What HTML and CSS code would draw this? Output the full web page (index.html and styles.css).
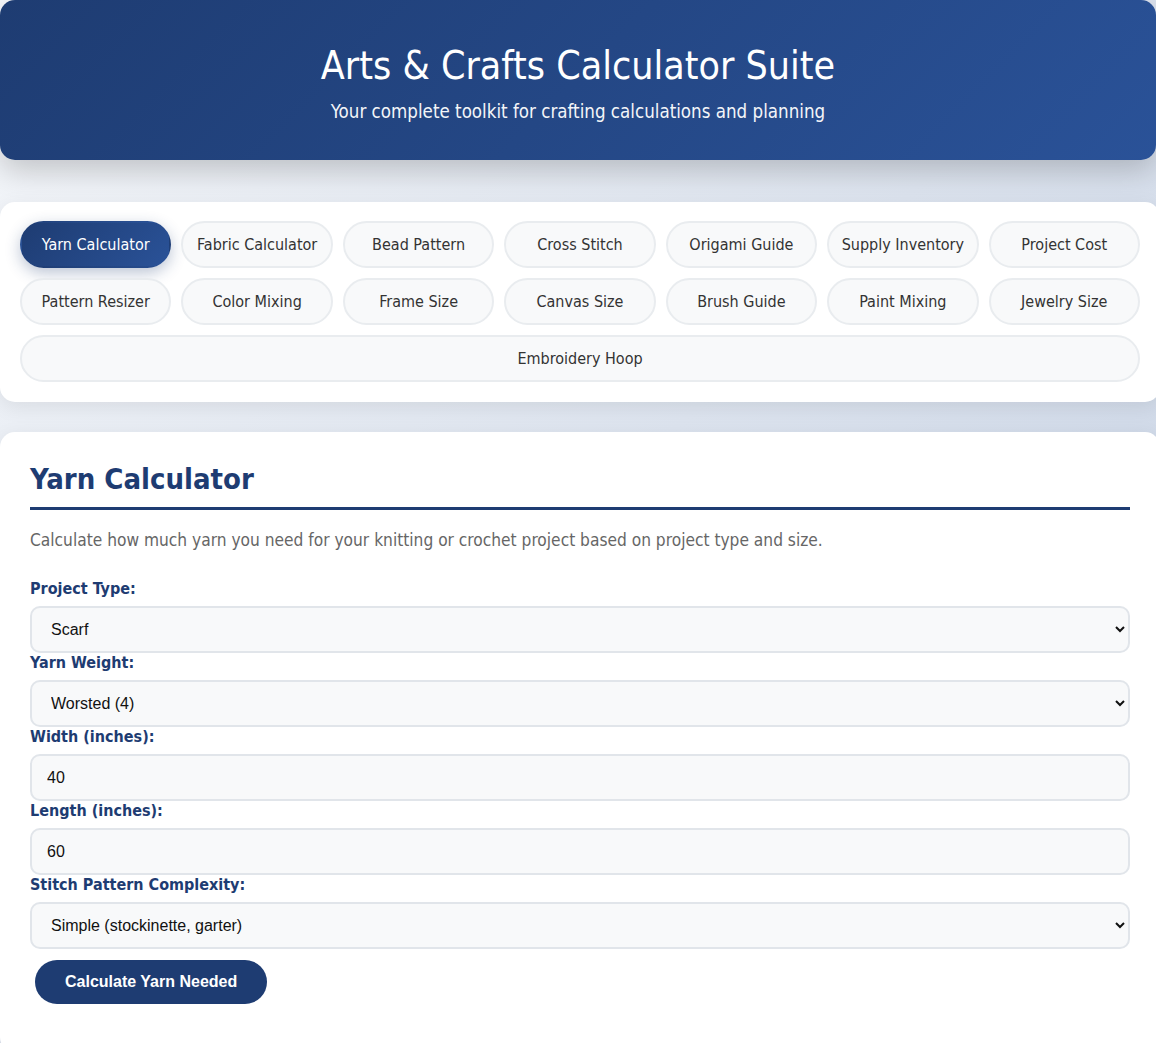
FILE: index.html
```html
<!DOCTYPE html>
<html lang="en">
<head>
    <meta charset="UTF-8">
    <meta name="viewport" content="width=device-width, initial-scale=1.0">
    <title>Arts &amp; Crafts Calculator Suite</title>
    <link rel="stylesheet" href="styles.css">
</head>
<body>
    <div class="container">
        <header class="header">
            <h1>Arts &amp; Crafts Calculator Suite</h1>
            <p>Your complete toolkit for crafting calculations and planning</p>
        </header>

        <nav class="nav-card">
            <div class="tabs">
                <button class="tab active">Yarn Calculator</button>
                <button class="tab">Fabric Calculator</button>
                <button class="tab">Bead Pattern</button>
                <button class="tab">Cross Stitch</button>
                <button class="tab">Origami Guide</button>
                <button class="tab">Supply Inventory</button>
                <button class="tab">Project Cost</button>
                <button class="tab">Pattern Resizer</button>
                <button class="tab">Color Mixing</button>
                <button class="tab">Frame Size</button>
                <button class="tab">Canvas Size</button>
                <button class="tab">Brush Guide</button>
                <button class="tab">Paint Mixing</button>
                <button class="tab">Jewelry Size</button>
                <button class="tab">Embroidery Hoop</button>
            </div>
        </nav>

        <section class="calculator">
            <h2>Yarn Calculator</h2>
            <p class="description">Calculate how much yarn you need for your knitting or crochet project based on project type and size.</p>

            <div class="form-group">
                <label for="projectType">Project Type:</label>
                <select id="projectType">
                    <option>Scarf</option>
                    <option>Hat</option>
                    <option>Sweater</option>
                    <option>Blanket</option>
                </select>
            </div>

            <div class="form-group">
                <label for="yarnWeight">Yarn Weight:</label>
                <select id="yarnWeight">
                    <option>Worsted (4)</option>
                    <option>Fingering (1)</option>
                    <option>DK (3)</option>
                    <option>Bulky (5)</option>
                </select>
            </div>

            <div class="form-group">
                <label for="width">Width (inches):</label>
                <input type="number" id="width" value="40">
            </div>

            <div class="form-group">
                <label for="length">Length (inches):</label>
                <input type="number" id="length" value="60">
            </div>

            <div class="form-group">
                <label for="complexity">Stitch Pattern Complexity:</label>
                <select id="complexity">
                    <option>Simple (stockinette, garter)</option>
                    <option>Textured (cables, seed)</option>
                    <option>Complex (lace, colorwork)</option>
                </select>
            </div>

            <button class="calc-btn">Calculate Yarn Needed</button>
        </section>
    </div>
</body>
</html>
```

FILE: styles.css
```css
* {
    box-sizing: border-box;
}
body {
    margin: 0;
    font-family: "DejaVu Sans Condensed", "DejaVu Sans", sans-serif;
    background: linear-gradient(135deg, #f5f7fa 0%, #c3cfe2 100%);
    min-height: 100vh;
    color: #333;
    overflow-x: hidden;
}
.container {
    width: 100%;
}
.header {
    background: linear-gradient(135deg, #1e3c72 0%, #2a5298 100%);
    color: white;
    text-align: center;
    padding: 42px 20px 37px;
    border-radius: 15px;
    box-shadow: 0 10px 30px rgba(0,0,0,0.2);
    margin-bottom: 42px;
}
.header h1 {
    margin: 0 0 10px;
    font-size: 39px;
    font-weight: normal;
    line-height: 48px;
}
.header p {
    margin: 0;
    font-size: 18.6px;
    line-height: 23px;
    opacity: 0.95;
}
.nav-card {
    background: white;
    border-radius: 15px;
    padding: 19px 20px 20px;
    margin-right: -4px;
    box-shadow: 0 5px 20px rgba(0,0,0,0.08);
    margin-bottom: 30px;
}
.tabs {
    display: flex;
    flex-wrap: wrap;
    gap: 10px;
}
.tab {
    flex: 1 1 140px;
    height: 47px;
    padding: 0 12px;
    background: #f8f9fa;
    border: 2px solid #e9ecef;
    border-radius: 25px;
    font-family: inherit;
    font-size: 16px;
    color: #333;
    cursor: pointer;
}
.tab.active {
    background: linear-gradient(135deg, #1e3c72 0%, #2a5298 100%);
    border-color: transparent;
    color: white;
    box-shadow: 0 5px 15px rgba(30,60,114,0.3);
}
.calculator {
    background: white;
    border-radius: 15px;
    padding: 29px 30px 30px;
    margin-right: -4px;
    box-shadow: 0 5px 20px rgba(0,0,0,0.08);
    min-height: 620px;
}
.calculator h2 {
    margin: 0 0 20px;
    font-size: 29px;
    line-height: 36px;
    color: #1e3c72;
    border-bottom: 3px solid #1e3c72;
    padding-bottom: 10px;
}
.description {
    margin: 0 0 29px;
    font-size: 17.2px;
    color: #666;
}
.form-group label {
    display: block;
    font-weight: bold;
    color: #1e3c72;
    font-size: 16px;
    line-height: 20px;
    margin-bottom: 7px;
}
select, input {
    display: block;
    width: 100%;
    height: 47px;
    padding: 12px 15px;
    border: 2px solid #e1e5ea;
    border-radius: 10px;
    background: #f8f9fa;
    font-family: "Liberation Sans", Arial, sans-serif;
    font-size: 16px;
    color: #111;
}
.calc-btn {
    margin: 11px 0 0 5px;
    height: 44px;
    padding: 0 30px;
    background: #1e3c72;
    color: white;
    border: none;
    border-radius: 25px;
    font-family: "Liberation Sans", Arial, sans-serif;
    font-weight: bold;
    font-size: 16px;
    cursor: pointer;
}
```
